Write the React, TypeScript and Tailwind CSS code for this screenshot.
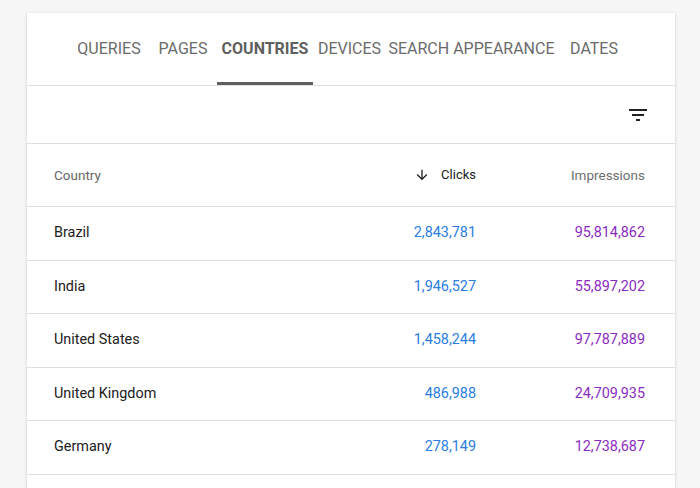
import React from 'react';

const tabs = [
  { label: 'QUERIES', w: 'w-[80px]' },
  { label: 'PAGES', w: 'w-[68px]' },
  { label: 'COUNTRIES', w: 'w-[96px]', active: true },
  { label: 'DEVICES', w: 'w-[73px]' },
  { label: 'SEARCH APPEARANCE', w: 'w-[171px]' },
  { label: 'DATES', w: 'w-[74px]' },
];

const rows = [
  { country: 'Brazil', clicks: '2,843,781', impressions: '95,814,862' },
  { country: 'India', clicks: '1,946,527', impressions: '55,897,202' },
  { country: 'United States', clicks: '1,458,244', impressions: '97,787,889' },
  { country: 'United Kingdom', clicks: '486,988', impressions: '24,709,935' },
  { country: 'Germany', clicks: '278,149', impressions: '12,738,687' },
];

function FilterIcon() {
  return (
    <svg width="24" height="24" viewBox="0 0 24 24" fill="#202124">
      <path d="M10 18h4v-2h-4v2zM3 6v2h18V6H3zm3 7h12v-2H6v2z" />
    </svg>
  );
}

function ArrowDown() {
  return (
    <svg width="16" height="16" viewBox="0 0 24 24" fill="#202124">
      <path d="M20 12l-1.41-1.41L13 16.17V4h-2v12.17l-5.58-5.59L4 12l8 8 8-8z" />
    </svg>
  );
}

export default function App() {
  return (
    <div className="h-[488px] overflow-hidden bg-[#f6f6f6] pt-[13px] pl-[27px] font-['Roboto',sans-serif]">
      <div className="w-[648px] bg-white pb-[40px] shadow-[0_1px_3px_rgba(0,0,0,0.18)]">
        <div className="flex h-[73px] border-b border-[#e0e0e0] pl-[42px]">
          {tabs.map(tab => (
            <div
              key={tab.label}
              className={`${tab.w} relative flex items-center justify-center text-[16px] ${
                tab.active ? 'font-bold text-[#5f5f5f]' : 'text-[#6b6b6b]'
              }`}
            >
              {tab.label}
              {tab.active && (
                <div className="absolute bottom-0 left-0 right-0 h-[3px] bg-[#5f5f5f]" />
              )}
            </div>
          ))}
        </div>

        <div className="flex h-[58px] items-center justify-end border-b border-[#e0e0e0] pr-[25px]">
          <FilterIcon />
        </div>

        <div className="flex h-[63px] items-center border-b border-[#e0e0e0] pl-[27px] pr-[30px] text-[13.5px]">
          <div className="flex-1 text-[#666]">Country</div>
          <div className="flex w-[150px] items-center justify-end gap-[11px] text-[13px] text-[#212121]">
            <ArrowDown />
            <span>Clicks</span>
          </div>
          <div className="w-[169px] text-right text-[#6e6e6e]">Impressions</div>
        </div>

        {rows.map(row => (
          <div
            key={row.country}
            className="flex h-[53.5px] items-center border-b border-[#e0e0e0] pl-[27px] pr-[30px] text-[14.4px]"
          >
            <div className="flex-1 text-[#212121]">{row.country}</div>
            <div className="w-[150px] text-right text-[#2a7de1]">{row.clicks}</div>
            <div className="w-[169px] text-right text-[#8a2dbf]">{row.impressions}</div>
          </div>
        ))}
      </div>
    </div>
  );
}
